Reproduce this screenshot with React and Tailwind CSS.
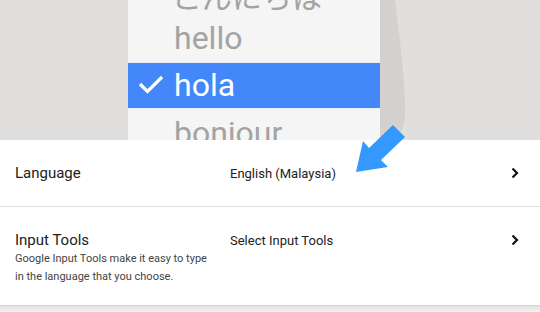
import React from "react";

const Chevron = () => (
  <svg width="8" height="12" viewBox="0 0 8 12" className="shrink-0">
    <path d="M1.5 1.5 L6 6 L1.5 10.5" fill="none" stroke="#111" strokeWidth="2.2" />
  </svg>
);

const PhoneMockup = () => (
  <div className="flex h-[140px] overflow-hidden bg-[#e0dfdd]">
    <div className="w-[128px] shrink-0" />
    <div className="w-[252px] shrink-0 bg-[#f5f5f5] text-[32px] text-[#a3a3a3]" style={{ fontFamily: "Roboto, 'Noto Sans CJK JP', sans-serif" }}>
      <div className="-mt-[30px] h-[46px] pl-[44px] leading-[56px] text-[30px]">こんにちは</div>
      <div className="h-[46px] pl-[46px] leading-[44px]">hello</div>
      <div className="h-[1px] bg-[#e9eef8]" />
      <div className="flex h-[45px] items-center bg-[#4487fb] text-white">
        <svg width="46" height="45" viewBox="0 0 46 45" className="shrink-0">
          <path d="M12 21 L19.5 28.5 L34 14" fill="none" stroke="#fff" strokeWidth="3.2" />
        </svg>
        <span className="leading-[45px]">hola</span>
      </div>
      <div className="h-[1px] bg-[#e9eef8]" />
      <div className="h-[46px] pl-[46px] leading-[48px]">bonjour</div>
    </div>
    <svg width="30" height="140" viewBox="0 0 30 140" className="shrink-0">
      <path d="M0 0 L15 0 C20 40 26 90 25 115 C24 130 18 138 12 140 L0 140 Z" fill="#d2d1cf" />
    </svg>
  </div>
);

const Row = ({ title, desc, value, className }) => (
  <div className={`flex ${className}`}>
    <div className="w-[230px] shrink-0 pl-[15px]">
      <div className="text-[15px] leading-[20px] text-[#212121]">{title}</div>
      {desc && (
        <div className="w-[196px] text-[11px] leading-[18px] text-[#444]">{desc}</div>
      )}
    </div>
    <div className="flex-1 pt-[1px] text-[13px] leading-[20px] text-[#222]">{value}</div>
    <div className="flex h-[20px] w-[30px] items-center pl-[1px]">
      <Chevron />
    </div>
  </div>
);

export default function App() {
  return (
    <div className="relative h-[312px] w-[540px] overflow-hidden bg-[#f1f1f1]" style={{ fontFamily: "Roboto, sans-serif" }}>
      <PhoneMockup />
      <div className="bg-white">
        <Row title="Language" value="English (Malaysia)" className="h-[67px] items-center border-b border-[#e0e0e0]" />
        <Row
          title="Input Tools"
          desc="Google Input Tools make it easy to type in the language that you choose."
          value="Select Input Tools"
          className="h-[99px] items-start pt-[23px] border-b border-[#d4d4d4]"
        />
      </div>
      <div className="h-[6px] bg-gradient-to-b from-[#e2e2e2] to-[#f3f3f3]" />
      <svg className="pointer-events-none absolute left-0 top-0" width="540" height="312" viewBox="0 0 540 312">
        <polygon points="393,125 405,137 381,160 388,167 356,172 363,141 369,148" fill="#3399ff" />
      </svg>
    </div>
  );
}
